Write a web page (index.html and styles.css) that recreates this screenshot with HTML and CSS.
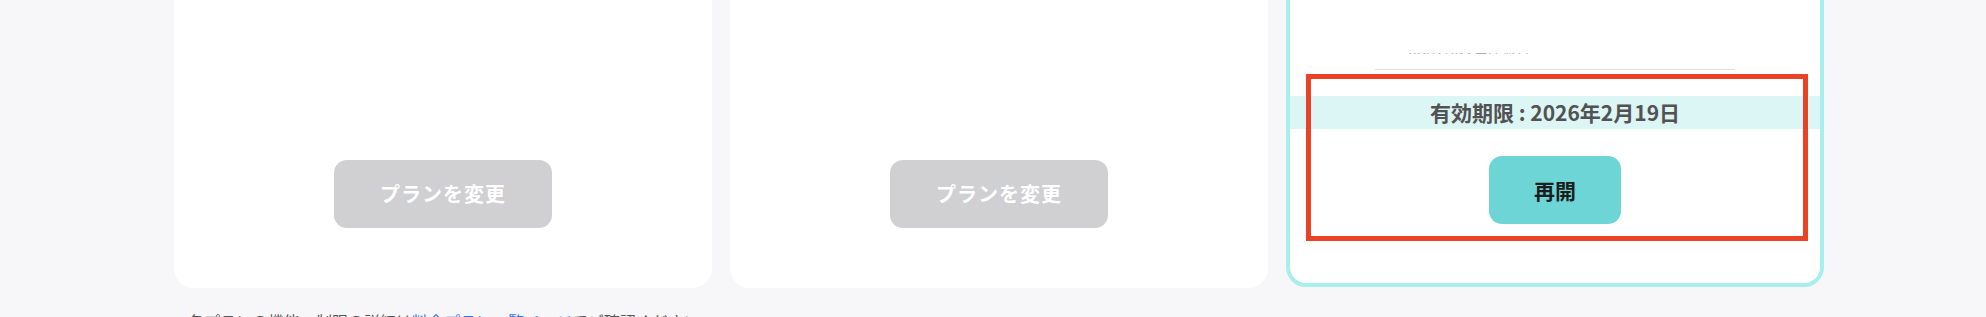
FILE: index.html
```html
<!DOCTYPE html>
<html lang="ja">
<head>
<meta charset="utf-8">
<title>プラン</title>
<link rel="stylesheet" href="styles.css">
</head>
<body>
<div class="page">
  <div class="cards">
    <div class="card">
      <button class="btn btn-gray">プランを変更</button>
    </div>
    <div class="card">
      <button class="btn btn-gray">プランを変更</button>
    </div>
    <div class="card card-active">
      <div class="clipline"><span>決済方法 : 口座振替</span></div>
      <div class="divider"></div>
      <div class="expiry">有効期限 : 2026年2月19日</div>
      <button class="btn btn-teal">再開</button>
      <div class="highlight"></div>
    </div>
  </div>
  <p class="note">各プランの機能・制限の詳細は<a href="#" class="link">料金プラン一覧ページ</a>でご確認ください。</p>
</div>
</body>
</html>
```

FILE: styles.css
```css
* { box-sizing: border-box; }
html, body {
  margin: 0;
  padding: 0;
  background: #f7f7f9;
  font-family: "Noto Sans CJK JP", "Noto Sans", sans-serif;
  overflow: hidden;
}
.page {
  padding-left: 174px;
}
.cards {
  display: grid;
  grid-template-columns: repeat(3, 538px);
  column-gap: 18px;
  margin-top: -40px;
}
.card {
  position: relative;
  height: 328px;
  background: #ffffff;
  border-radius: 20px;
  display: flex;
  flex-direction: column;
  align-items: center;
  justify-content: flex-end;
  padding-bottom: 60px;
}
.card-active {
  border: 4px solid #a8eeec;
  border-radius: 20px;
  height: 327px;
  padding-bottom: 59px;
  align-items: stretch;
}
.btn {
  border: 0;
  height: 68px;
  border-radius: 13px;
  font-family: "Noto Sans CJK JP", "Noto Sans", sans-serif;
  font-weight: 700;
  font-size: 20px;
  line-height: 1;
  padding: 0;
  cursor: pointer;
}
.btn-gray {
  width: 218px;
  background: #d0cfd2;
  color: #ffffff;
  letter-spacing: 1px;
}
.btn-teal {
  width: 132px;
  align-self: center;
  background: #6dd5d6;
  color: #1c1c1c;
  font-size: 21px;
}
.clipline {
  height: 1px;
  overflow: hidden;
  margin-left: 118px;
  margin-top: 1px;
  margin-bottom: 15px;
  color: #b0b0b0;
  font-size: 14px;
}
.clipline span {
  display: block;
  line-height: 14px;
  margin-top: -12px;
  white-space: nowrap;
}
.divider {
  align-self: center;
  width: 360px;
  height: 1px;
  background: #e0dfe2;
  margin-bottom: 26px;
}
.expiry {
  height: 33px;
  background: #dcf5f5;
  color: #525252;
  font-weight: 700;
  font-size: 21px;
  line-height: 33px;
  text-align: center;
  margin-bottom: 27px;
}
.highlight {
  position: absolute;
  left: 16px;
  top: 110px;
  width: 502px;
  height: 167px;
  border: 5px solid #e94227;
  pointer-events: none;
}
.note {
  margin: 21px 0 0 14px;
  font-size: 16px;
  line-height: 24px;
  color: #555555;
}
.link {
  color: #3b72e8;
  text-decoration: none;
}
```
